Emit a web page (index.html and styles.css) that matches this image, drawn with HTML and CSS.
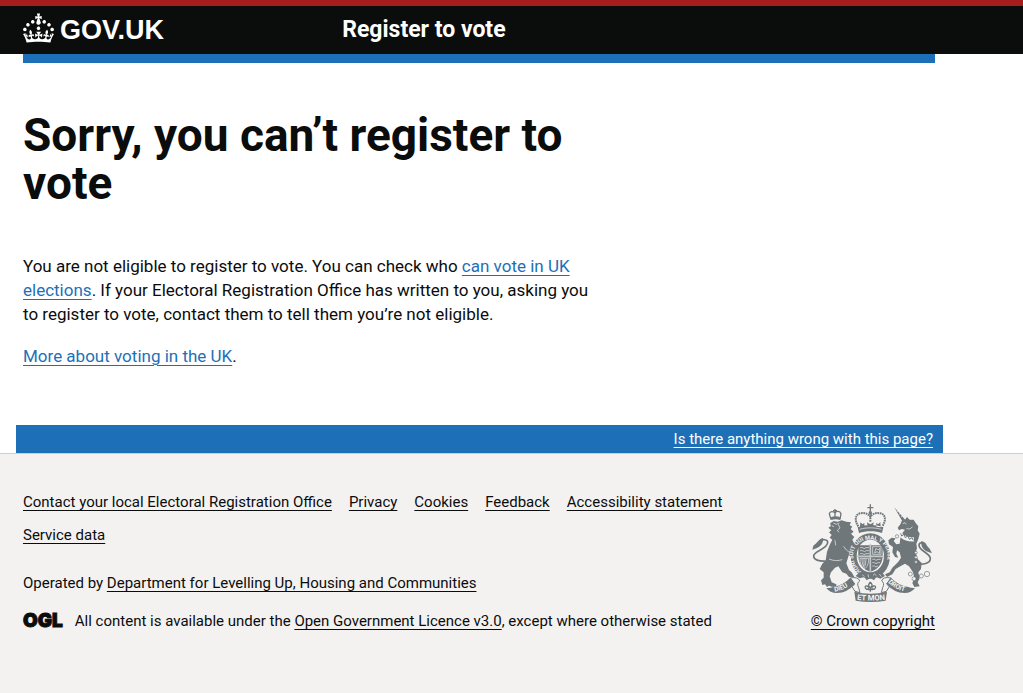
FILE: index.html
```
<!DOCTYPE html>
<html lang="en">
<head>
    <meta charset="UTF-8">
    <meta name="viewport" content="width=device-width, initial-scale=1.0">
    <title>Sorry, you can’t register to vote - GOV.UK</title>
    <link rel="stylesheet" href="styles.css">
</head>
<body>

    <header class="header">
        <div class="container header-content">
            <a class="logo" href="#">
                <svg class="logo-crown" viewBox="0 0 32 30" aria-hidden="true">
                    <path d="M22.6 10.4c-1 .4-2-.1-2.4-1-.4-.9.1-2 1-2.4.9-.4 2 .1 2.4 1s-.1 2-1 2.4m-5.9 6.7c-.9.4-2-.1-2.4-1-.4-.9.1-2 1-2.4.9-.4 2 .1 2.4 1s-.1 2-1 2.4m10.8-3.7c-1 .4-2-.1-2.4-1-.4-.9.1-2 1-2.4.9-.4 2 .1 2.4 1s0 2-1 2.4m3.3 4.8c-1 .4-2-.1-2.4-1-.4-.9.1-2 1-2.4.9-.4 2 .1 2.4 1s-.1 2-1 2.4M17 4.7l2.3 1.2V2.5l-2.3.7-.2-.2.9-3h-3.4l.9 3-.2.2c-.1.1-2.3-.7-2.3-.7v3.4L15 4.7c.1.1.1.2.2.2l-1.3 4c-.1.2-.1.4-.1.6 0 1.1.8 2 1.9 2.2h.7c1-.2 1.9-1.1 1.9-2.1 0-.2 0-.4-.1-.6l-1.3-4c-.1-.2 0-.2.1-.3m-7.6 5.7c.9.4 2-.1 2.4-1 .4-.9-.1-2-1-2.4-.9-.4-2 .1-2.4 1s0 2 1 2.4m-5 3c.9.4 2-.1 2.4-1 .4-.9-.1-2-1-2.4-.9-.4-2 .1-2.4 1s.1 2 1 2.4m-3.2 4.8c.9.4 2-.1 2.4-1 .4-.9-.1-2-1-2.4-.9-.4-2 .1-2.4 1s0 2 1 2.4m14.8 11c4.4 0 8.6.3 12.3.8 1.1-4.5 2.4-7 3.7-8.8l-2.5-.9c.2 1.3.3 1.9 0 2.7-.4-.4-.8-1.1-1.1-2.3l-1.2 4c.7-.5 1.3-.8 2-.9-1.1 2.5-2.6 3.1-3.5 3-1.1-.2-1.7-1.2-1.5-2.1.3-1.2 1.5-1.5 2.1-.1 1.1-2.3-.8-3-2-2.3 1.9-1.9 2.1-3.5.6-5.6-2.1 1.6-2.1 3.2-1.2 5.5-1.2-1.4-3.2-.6-2.5 1.6.9-1.4 2.1-.5 1.9.8-.2 1.1-1.7 2.1-3.5 1.9-2.7-.2-2.9-2.1-2.9-3.6.7-.1 1.9.5 2.9 1.9l.4-4.3c-1.1 1.1-2.1 1.4-3.2 1.4.4-1.2 2.1-3 2.1-3h-5.4s1.7 1.9 2.1 3c-1.1 0-2.1-.2-3.2-1.4l.4 4.3c1-1.4 2.2-2 2.9-1.9-.1 1.5-.2 3.4-2.9 3.6-1.9.2-3.4-.8-3.5-1.9-.2-1.3 1-2.2 1.9-.8.7-2.3-1.2-3-2.5-1.6.9-2.2.9-3.9-1.2-5.5-1.5 2-1.3 3.7.6 5.6-1.2-.7-3.1 0-2 2.3.6-1.4 1.8-1.1 2.1.1.2.9-.3 1.9-1.5 2.1-.9.2-2.4-.5-3.5-3 .6 0 1.2.3 2 .9l-1.2-4c-.3 1.1-.7 1.9-1.1 2.3-.3-.8-.2-1.4 0-2.7l-2.9.9C1.3 23 2.6 25.5 3.7 30c3.7-.5 7.9-.8 12.3-.8"/>
                </svg>
                <span>GOV.UK</span>
            </a>
            <a class="service-name" href="#">Register to vote</a>
        </div>
    </header>

    <div class="container">
        <div class="header-bar"></div>
        <main class="main">
            <h1>Sorry, you can’t register to vote</h1>
            <p>You are not eligible to register to vote. You can check who <a href="#">can vote in UK elections</a>. If your Electoral Registration Office has written to you, asking you to register to vote, contact them to tell them you’re not eligible.</p>
            <p><a href="#">More about voting in the UK</a>.</p>
        </main>
    </div>

    <div class="feedback-bar">
        <a href="#">Is there anything wrong with this page?</a>
    </div>

    <footer class="footer">
        <div class="container footer-content">
            <div class="footer-meta">
                <ul class="footer-links">
                    <li><a href="#">Contact your local Electoral Registration Office</a></li>
                    <li><a href="#">Privacy</a></li>
                    <li><a href="#">Cookies</a></li>
                    <li><a href="#">Feedback</a></li>
                    <li><a href="#">Accessibility statement</a></li>
                    <li><a href="#">Service data</a></li>
                </ul>
                <div class="operated">Operated by <a href="#">Department for Levelling Up, Housing and Communities</a></div>
                <div class="licence">
                    <span class="ogl">OGL</span>
                    <span>All content is available under the <a href="#">Open Government Licence v3.0</a>, except where otherwise stated</span>
                </div>
            </div>

            <div class="copyright">
                <!-- Royal coat of arms -->
                <svg class="crest" viewBox="36 24 372 300" aria-hidden="true">
                    <!-- Crown on top -->
                    <g class="line">
                        <path d="M214 28v22M205 38h18"/>
                        <path class="dotted" d="M178 94c-12-18-10-36 6-39 16-3 25 3 30 10 5-7 14-13 30-10 16 3 18 21 6 39"/>
                        <path class="dotted" d="M214 54v26"/>
                    </g>
                    <path class="fill" d="M176 97c22-9 54-9 77 0l-4 17c-20-7-48-7-69 0zM204 82l10 6 10-6-2 12h-16zM184 82l7 6 5-5v12l-13 2zM244 82l-7 6-5-5v12l13 2z"/>
                    <path class="cut-line" d="M182 103c20-6 44-6 65 0"/>
                    <circle class="fill" cx="214" cy="53" r="5"/>

                    <!-- Lion -->
                    <path class="line" d="M96 74l-5-18c2-8 12-8 17-2 5-7 15-6 18 2l-3 17M108 42v30M102 47h12"/>
                    <path class="fill" d="M95 67c9-4 20-4 29 0l-1 8c-8-3-18-3-26 0z"/>
                    <path class="fill" d="M94 84l10-6 12 2 12-4 14 4 14 2-4 8 8 5-5 7 9 8-8 6 10 10-6 8 8 16-4 15 6 20-12 6-8-12-4 12-4 14 8 20 8 7 8 14h-16l-8-10-12-4-12-18-10 4-12 14-4 12 6 18 14 6v8l-14-1-8-3-6 4-6-8-8 2-4-14 8-8v-16l-12-10 8-16 10-10 4-26 8-20 8-16-8-6 6-8-8-8 7-6-9-8 7-4z"/>
                    <path class="cut-line" d="M103 84l9 4 9-4M118 88l5 11-8 7 5 6M98 92l7 3M108 136l2 15M90 192c14 6 26 6 40 2M134 154c8 13 14 18 25 15"/>
                    <path class="tail" d="M80 198c-20 1-36-3-36-15 0-16 42-20 42-41 0-9-16-11-22-3"/>
                    <path class="fill" d="M72 129c-14 3-16 15-29 23l-3 12c17-5 35-13 32-35z"/>

                    <!-- Unicorn -->
                    <path class="fill" d="M286 37l33 38-9 4z"/>
                    <path class="cut-line" d="M294 50l4-3M300 58l5-3M306 66l5-3"/>
                    <path class="fill" d="M318 74l6-8 8 8h12l6 10 8 10-2 12 6 10-4 16-6 14 2 14-4 12 6 20 12 12-2 18-8 10 4 18-6 12 6 12-16 2-6-12 6-14-4-18-12-18-12-8-14 8-14 8-10 16-16 8-6-8 14-6 8-14 18-18 8-12-4-16-8-6-2 10 6 12-10-2-8-14 2-16-12-8-2-12 10-8 12 2-6 8 8 10 10-2 2-16 6-16 8-10-10-2-8 4-4-8 8-10 4-10z"/>
                    <path class="cut-line" d="M311 86l7-3 4 5M322 100c8 4 14 2 18-5"/>
                    <path class="collar" d="M305 119c10 10 24 15 40 14"/>
                    <path class="collar-points" d="M305 115l3 8 7-5 4 10 8-6 4 11 8-5 4 8"/>
                    <path class="tail" d="M352 206c24 4 42-3 42-15 0-18-34-22-34-40 0-9 13-11 20-2"/>
                    <path class="fill" d="M366 139c13-1 15 12 25 21l8 14c-18-3-33-10-33-35z"/>
                    <g class="chain">
                        <circle cx="294" cy="124" r="5"/>
                        <circle cx="351" cy="173" r="4"/>
                        <circle cx="351" cy="187" r="4"/>
                        <circle cx="351" cy="201" r="4"/>
                        <circle cx="334" cy="237" r="6"/>
                        <circle cx="345" cy="251" r="6"/>
                        <circle cx="367" cy="243" r="6"/>
                        <circle cx="384" cy="237" r="8"/>
                    </g>

                    <!-- Garter and shield -->
                    <ellipse class="fill" cx="214" cy="183" rx="59" ry="68"/>
                    <ellipse class="field" cx="214" cy="183" rx="41" ry="49"/>
                    <path id="garter" d="M187 229C146 195 158 134 214 134S284 198 241 229" fill="none"/>
                    <text class="garter-text"><textPath href="#garter">HONI SOIT QUI MAL Y PENSE</textPath></text>
                    <path class="fill" d="M178 151h73v35c-2 24-18 39-37 44-20-6-34-20-36-44z"/>
                    <path class="shield-cross" d="M214 146v84M174 184h80"/>
                    <g class="cut-line">
                        <path d="M183 158h8l4 3 6-3h9M183 167h8l5 3 6-3h8M183 176h8l4 3 6-3h9"/>
                        <path d="M221 155h25v23h-25zM227 174l3-13 8 3 5-4-2 15-7-5z"/>
                        <path d="M183 190h26c0 17-5 27-13 32-10-9-14-19-13-32M189 191c0 13 2 20 8 27M195 190v25M201 191l-2 21"/>
                        <path d="M220 193h7l4 3 6-3h8M220 203h7l4 3 6-3h6M220 213h7l4 3 6-3"/>
                    </g>
                    <path class="fill" d="M182 231c23 14 44 14 65-1l11 13-14 8-12-5-7 10-11-7-11 7-7-10-14 4-12-7z"/>
                    <path class="cut-line" d="M190 239l6 6M207 238l2 9M222 241l5-4 5 5M241 237l6 8"/>

                    <!-- Motto ribbons -->
                    <g class="ribbon-fold">
                        <path d="M154 249q24-5 28 9-10 6-3 20l4 15-15-4-9-14 8-8z"/>
                        <path d="M276 249q-24-5-28 9 10 6 3 20l-4 15 15-4 9-14-8-8z"/>
                    </g>
                    <g class="fill">
                        <path d="M82 279q12 1 20-3 32-6 52-28l14 18q-22 27-55 28-20 0-31-15z"/>
                        <path d="M348 279q-12 1-20-3-32-6-52-28l-14 18q22 27 55 28 20 0 31-15z"/>
                        <path d="M166 290q48 12 98 0l-4 27q-45 8-90 0z"/>
                    </g>
                    <path id="left-motto" d="M107 290q33-5 55-28" fill="none"/>
                    <path id="right-motto" d="M267 262q22 24 60 29" fill="none"/>
                    <path id="middle-motto" d="M174 314q40 5 88 0" fill="none"/>
                    <text class="motto"><textPath href="#left-motto">DIEU</textPath></text>
                    <text class="motto"><textPath href="#right-motto">DROIT</textPath></text>
                    <text class="motto motto-middle"><textPath href="#middle-motto">ET MON</textPath></text>
                    <path class="line" d="M214 261c-7 9-7 12 0 17 7-5 7-8 0-17M211 278c-12-12-17 0-8 5l8-3M217 278c12-12 17 0 8 5l-8-3M214 279v11M206 284h16"/>
                </svg>
                <a href="#">© Crown copyright</a>
            </div>
        </div>
    </footer>

</body>
</html>
```
FILE: styles.css
```
body {
    margin: 0;
    min-height: 100vh;
    display: flex;
    flex-direction: column;
    color: #0b0c0c;
    background-color: #fff;
    font-family: Roboto, "Liberation Sans", sans-serif;
    font-size: 17px;
    line-height: 24px;
}

a {
    color: #1d70b8;
    text-decoration: underline;
    text-decoration-thickness: 1px;
    text-underline-offset: 3px;
}

.container {
    margin: 0 88px 0 23px;
}

/* Header */
.header {
    background-color: #0b0c0c;
    border-top: 6px solid #a71c1c;
}

.header-content {
    display: grid;
    grid-template-columns: 35% 1fr;
    align-items: center;
    height: 48px;
}

.header a {
    color: #fff;
    font-weight: bold;
    text-decoration: none;
}

.logo {
    display: flex;
    align-items: center;
    gap: 6px;
    font-family: "Liberation Sans", Arial, sans-serif;
    font-size: 27px;
}

.logo-crown {
    width: 31px;
    height: 30px;
    margin-bottom: 4px;
    fill: #fff;
}

.service-name {
    font-size: 23px;
}

.header-bar {
    height: 9px;
    background-color: #1d70b8;
}

/* Content */
.main {
    max-width: 575px;
    padding: 48px 0 57px;
}

h1 {
    margin: 0 0 47px;
    font-size: 46px;
    line-height: 48px;
}

p {
    margin: 0 0 18px;
}

p:last-child {
    margin-bottom: 0;
}

.feedback-bar {
    margin: 0 80px 0 16px;
    padding: 4px 10px;
    background-color: #1d70b8;
    font-size: 15px;
    line-height: 20px;
    text-align: right;
}

.feedback-bar a {
    color: #fff;
}

/* Footer */
.footer {
    flex: 1;
    border-top: 1px solid #cecece;
    background-color: #f3f2f1;
    font-size: 15px;
    line-height: 20px;
}

.footer a {
    color: #0b0c0c;
}

.footer-content {
    display: flex;
    justify-content: space-between;
    padding: 38px 0;
}

.footer-meta {
    flex: 1;
    max-width: 730px;
}

.footer-links {
    display: flex;
    flex-wrap: wrap;
    gap: 13px 17px;
    margin: 0 0 28px;
    padding: 0;
    list-style: none;
}

.operated {
    margin-bottom: 18px;
}

.licence {
    display: flex;
    align-items: center;
    gap: 12px;
}

.ogl {
    font-family: Inter, sans-serif;
    font-size: 19px;
    font-weight: 900;
    -webkit-text-stroke: 1px #0b0c0c;
}

.copyright {
    display: flex;
    flex-direction: column;
    align-items: center;
    gap: 8px;
    padding-top: 11px;
}

/* Coat of arms */
.crest {
    width: 124px;
    height: 100px;
}

.fill {
    fill: #6f777b;
}

.line {
    fill: none;
    stroke: #6f777b;
    stroke-width: 4;
}

.dotted {
    stroke-width: 6;
    stroke-dasharray: 5 2;
}

.tail {
    fill: none;
    stroke: #6f777b;
    stroke-width: 5;
}

.cut-line {
    fill: none;
    stroke: #f3f2f1;
    stroke-width: 2;
}

.collar {
    fill: none;
    stroke: #f3f2f1;
    stroke-width: 13;
}

.collar-points {
    fill: none;
    stroke: #6f777b;
    stroke-width: 3;
}

.chain {
    fill: #f3f2f1;
    stroke: #6f777b;
    stroke-width: 2;
}

.field {
    fill: #f3f2f1;
}

.shield-cross {
    fill: none;
    stroke: #c4c8c9;
    stroke-width: 5;
}

.ribbon-fold {
    fill: #f3f2f1;
    stroke: #6f777b;
    stroke-width: 3;
}

.garter-text {
    fill: #f3f2f1;
    font-size: 17px;
    font-weight: bold;
}

.motto {
    fill: #f3f2f1;
    font-size: 20px;
    font-weight: bold;
}

.motto-middle {
    font-size: 23px;
}
```
